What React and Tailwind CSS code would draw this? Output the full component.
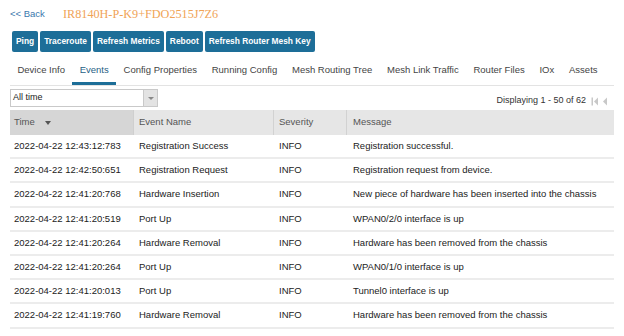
import React from 'react'

const rows = [
  ["2022-04-22 12:43:12:783", "Registration Success", "INFO", "Registration successful."],
  ["2022-04-22 12:42:50:651", "Registration Request", "INFO", "Registration request from device."],
  ["2022-04-22 12:41:20:768", "Hardware Insertion", "INFO", "New piece of hardware has been inserted into the chassis"],
  ["2022-04-22 12:41:20:519", "Port Up", "INFO", "WPAN0/2/0 interface is up"],
  ["2022-04-22 12:41:20:264", "Hardware Removal", "INFO", "Hardware has been removed from the chassis"],
  ["2022-04-22 12:41:20:264", "Port Up", "INFO", "WPAN0/1/0 interface is up"],
  ["2022-04-22 12:41:20:013", "Port Up", "INFO", "Tunnel0 interface is up"],
  ["2022-04-22 12:41:19:760", "Hardware Removal", "INFO", "Hardware has been removed from the chassis"],
]

const buttons = ["Ping", "Traceroute", "Refresh Metrics", "Reboot", "Refresh Router Mesh Key"]

const tabs = ["Device Info", "Events", "Config Properties", "Running Config", "Mesh Routing Tree", "Mesh Link Traffic", "Router Files", "IOx", "Assets"]

export default function App() {
  return (
    <div className="w-[624px] h-[336px] overflow-hidden bg-white text-[#333] font-['Liberation_Sans',Arial,sans-serif] text-[9.5px]">
      {/* header */}
      <div className="flex items-center h-[28px] pl-[10px] pt-[1px]">
        <a className="text-[#3a78ad] text-[9.5px] w-[53px]">&lt;&lt; Back</a>
        <span className="text-[#f0a356] text-[12.2px] font-['Liberation_Serif',serif]">IR8140H-P-K9+FDO2515J7Z6</span>
      </div>

      {/* actions */}
      <div className="flex gap-[2px] pl-[12px] mt-[3px]">
        {buttons.map(b => (
          <button key={b} className="h-[21px] px-[4px] rounded-[2px] bg-[#1d6e98] text-white font-bold text-[8.4px] leading-none whitespace-nowrap">
            {b}
          </button>
        ))}
      </div>

      {/* tabs */}
      <div className="flex mx-[10px] mt-[6px] h-[28px] border-b border-[#e3e3e3]">
        {tabs.map(t => (
          <div
            key={t}
            className={`shrink-0 px-[7.4px] flex items-center whitespace-nowrap text-[9.5px] border-b-[3px] ${t === "Events" ? "border-[#1d6e98] text-[#1f5f86] font-medium" : "border-transparent text-[#444]"}`}
          >
            {t}
          </div>
        ))}
      </div>

      {/* toolbar */}
      <div className="flex items-center justify-between mx-[10px] mt-[3px] h-[18px]">
        <div className="flex w-[148px] h-[18px] border border-[#c9c9c9]">
          <div className="flex-1 flex items-center pl-[2px] text-[9px] text-[#222]">All time</div>
          <div className="w-[14px] flex items-center justify-center bg-[#e3e3e3] border-l border-[#c9c9c9]">
            <span className="block w-0 h-0 border-l-[3px] border-r-[3px] border-t-[3px] border-l-transparent border-r-transparent border-t-[#888]"></span>
          </div>
        </div>
        <div className="flex items-center gap-[3px] mt-[6px] pr-[6px]">
          <span className="text-[9px] text-[#333] mr-[2px]">Displaying 1 - 50 of 62</span>
          <svg width="8" height="9" viewBox="0 0 8 9"><rect x="0.5" y="0.5" width="1.5" height="8" fill="#c8c8c8" /><path d="M7 0.5 L3 4.5 L7 8.5 Z" fill="#c8c8c8" /></svg>
          <svg width="6" height="9" viewBox="0 0 6 9"><path d="M5 0.5 L1 4.5 L5 8.5 Z" fill="#c8c8c8" /></svg>
        </div>
      </div>

      {/* table */}
      <div className="mx-[10px] mt-[3px]">
        <div className="grid grid-cols-[124px_140px_73px_1fr] h-[25px] bg-[#e6e6e6] text-[#555] text-[9.5px]">
          <div className="flex items-center pl-[4px] bg-[#d6d6d6] border-r border-[#cfcfcf]">
            Time
            <span className="ml-[10px] block w-0 h-0 border-l-[3px] border-r-[3px] border-t-[4px] border-l-transparent border-r-transparent border-t-[#555]"></span>
          </div>
          <div className="flex items-center pl-[5px] border-r border-[#d2d2d2]">Event Name</div>
          <div className="flex items-center pl-[5px] border-r border-[#d2d2d2]">Severity</div>
          <div className="flex items-center pl-[6px]">Message</div>
        </div>
        {rows.map((r, i) => (
          <div key={i} className="grid grid-cols-[124px_140px_73px_1fr] h-[24.2px] border-b-2 border-[#ececec] text-[#222] text-[9.5px] whitespace-nowrap">
            <div className="flex items-center pl-[4px]">{r[0]}</div>
            <div className="flex items-center pl-[5px]">{r[1]}</div>
            <div className="flex items-center pl-[5px]">{r[2]}</div>
            <div className="flex items-center pl-[6px]">{r[3]}</div>
          </div>
        ))}
      </div>
    </div>
  )
}
